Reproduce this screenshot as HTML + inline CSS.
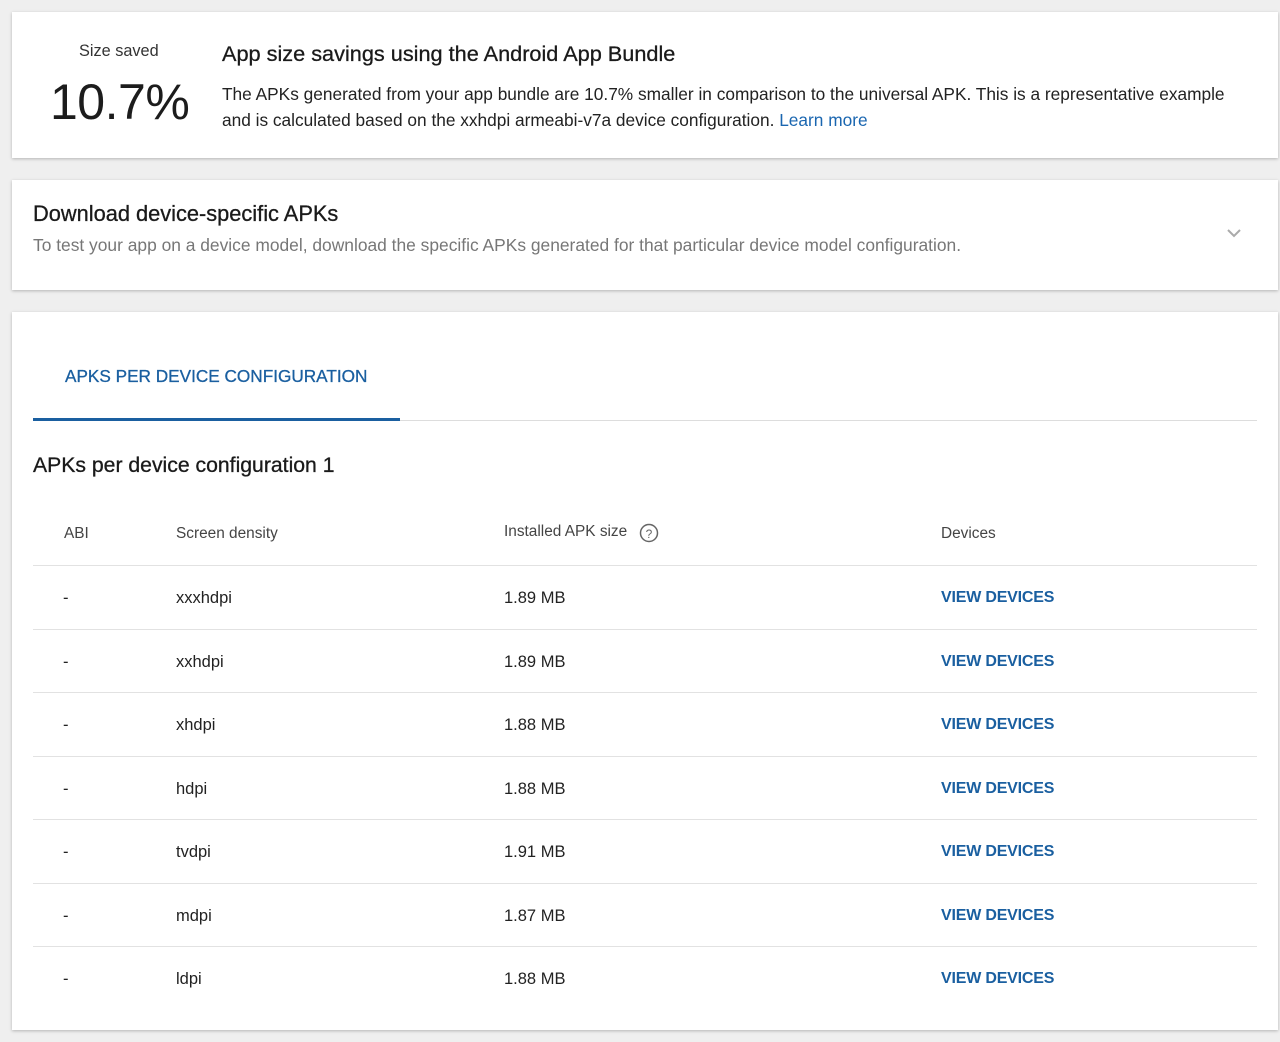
<!DOCTYPE html>
<html><head><style>
*{margin:0;padding:0;box-sizing:border-box}
body{width:1280px;height:1042px;background:#efefef;font-family:"Liberation Sans",sans-serif;color:#222;position:relative;overflow:hidden}
.card{position:absolute;left:12px;width:1266px;background:#fff;box-shadow:0 1px 3px rgba(0,0,0,.25)}
.a{position:absolute;white-space:nowrap}
.row{position:absolute;left:33px;width:1224px;height:64px;border-top:1px solid #e2e2e2;font-size:16.5px}
.row span{position:absolute;top:23px}
.vd{color:#1a5fa0;font-weight:bold;font-size:16px;letter-spacing:-0.2px}
</style></head><body>
<div class="card" style="top:12px;height:146px">
<div class="a" style="left:67px;top:30px;font-size:16.3px;color:#333">Size saved</div>
<div class="a" style="left:38px;top:61px;font-size:50px;color:#1c1c1c;letter-spacing:-0.5px">10.7%</div>
<div class="a" style="left:210px;top:29px;font-size:21.7px;color:#1a1a1a;-webkit-text-stroke:0.3px #1a1a1a">App size savings using the Android App Bundle</div>
<div class="a" style="left:210px;top:69px;font-size:17.3px;line-height:26px">The APKs generated from your app bundle are 10.7% smaller in comparison to the universal APK. This is a representative example<br>and is calculated based on the xxhdpi armeabi-v7a device configuration. <span style="color:#1a66b0">Learn more</span></div>
</div>
<div class="card" style="top:180px;height:110px">
<div class="a" style="left:21px;top:21px;font-size:21.8px;color:#1a1a1a;-webkit-text-stroke:0.3px #1a1a1a">Download device-specific APKs</div>
<div class="a" style="left:21px;top:55px;font-size:17.4px;color:#777">To test your app on a device model, download the specific APKs generated for that particular device model configuration.</div>
<svg class="a" style="left:1214px;top:48px" width="16" height="10"><path d="M2 2l6 6 6-6" fill="none" stroke="#aaa" stroke-width="2"/></svg>
</div>
<div class="card" style="top:312px;height:718px"></div>
<div class="a" style="left:65px;top:366px;font-size:17.2px;color:#1a5fa0;-webkit-text-stroke:0.3px #1a5fa0">APKS PER DEVICE CONFIGURATION</div>
<div class="a" style="left:33px;top:420px;width:1224px;height:1px;background:#ddd"></div>
<div class="a" style="left:33px;top:418px;width:367px;height:3px;background:#1a5fa0"></div>
<div class="a" style="left:33px;top:454px;font-size:21.2px;color:#1a1a1a;-webkit-text-stroke:0.3px #1a1a1a">APKs per device configuration 1</div>
<div class="a" style="left:64px;top:525px;font-size:15.4px;color:#444">ABI</div>
<div class="a" style="left:176px;top:525px;font-size:15.4px;color:#444">Screen density</div>
<div class="a" style="left:504px;top:523px;font-size:15.4px;color:#444">Installed APK size</div>
<svg class="a" style="left:639px;top:523px" width="20" height="20"><circle cx="10" cy="10" r="8.5" fill="none" stroke="#666" stroke-width="1.5"/><text x="10" y="15" font-size="12" text-anchor="middle" fill="#666" font-family="Liberation Sans">?</text></svg>
<div class="a" style="left:941px;top:525px;font-size:15.4px;color:#444">Devices</div>
<div class="row" style="top:565px"><span style="left:30px">-</span><span style="left:143px">xxxhdpi</span><span style="left:471px">1.89 MB</span><span class="vd" style="left:908px">VIEW DEVICES</span></div>
<div class="row" style="top:629px"><span style="left:30px">-</span><span style="left:143px">xxhdpi</span><span style="left:471px">1.89 MB</span><span class="vd" style="left:908px">VIEW DEVICES</span></div>
<div class="row" style="top:692px"><span style="left:30px">-</span><span style="left:143px">xhdpi</span><span style="left:471px">1.88 MB</span><span class="vd" style="left:908px">VIEW DEVICES</span></div>
<div class="row" style="top:756px"><span style="left:30px">-</span><span style="left:143px">hdpi</span><span style="left:471px">1.88 MB</span><span class="vd" style="left:908px">VIEW DEVICES</span></div>
<div class="row" style="top:819px"><span style="left:30px">-</span><span style="left:143px">tvdpi</span><span style="left:471px">1.91 MB</span><span class="vd" style="left:908px">VIEW DEVICES</span></div>
<div class="row" style="top:883px"><span style="left:30px">-</span><span style="left:143px">mdpi</span><span style="left:471px">1.87 MB</span><span class="vd" style="left:908px">VIEW DEVICES</span></div>
<div class="row" style="top:946px"><span style="left:30px">-</span><span style="left:143px">ldpi</span><span style="left:471px">1.88 MB</span><span class="vd" style="left:908px">VIEW DEVICES</span></div>
</body></html>
